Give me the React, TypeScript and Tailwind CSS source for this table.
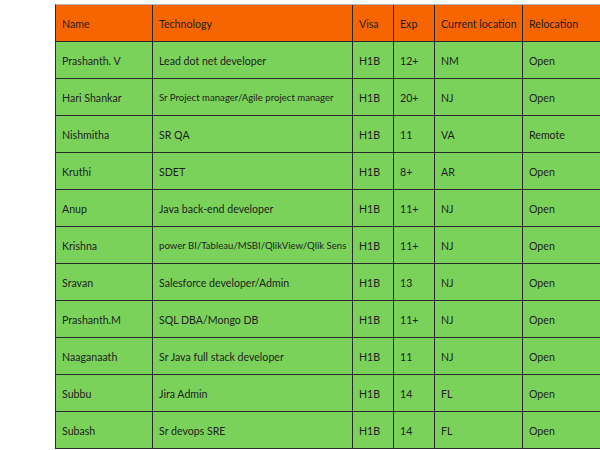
import React from "react";

interface Candidate {
  name: string;
  tech: string;
  visa: string;
  exp: string;
  location: string;
  relocation: string;
  small?: boolean;
}

const rows: Candidate[] = [
  { name: "Prashanth. V", tech: "Lead dot net developer", visa: "H1B", exp: "12+", location: "NM", relocation: "Open" },
  { name: "Hari Shankar", tech: "Sr Project manager/Agile project manager", visa: "H1B", exp: "20+", location: "NJ", relocation: "Open", small: true },
  { name: "Nishmitha", tech: "SR QA", visa: "H1B", exp: "11", location: "VA", relocation: "Remote" },
  { name: "Kruthi", tech: "SDET", visa: "H1B", exp: "8+", location: "AR", relocation: "Open" },
  { name: "Anup", tech: "Java back-end developer", visa: "H1B", exp: "11+", location: "NJ", relocation: "Open" },
  // the sheet cuts this cell off at the column edge
  { name: "Krishna", tech: "power BI/Tableau/MSBI/QlikView/Qlik Sens", visa: "H1B", exp: "11+", location: "NJ", relocation: "Open", small: true },
  { name: "Sravan", tech: "Salesforce developer/Admin", visa: "H1B", exp: "13", location: "NJ", relocation: "Open" },
  { name: "Prashanth.M", tech: "SQL DBA/Mongo DB", visa: "H1B", exp: "11+", location: "NJ", relocation: "Open" },
  { name: "Naaganaath", tech: "Sr Java full stack developer", visa: "H1B", exp: "11", location: "NJ", relocation: "Open" },
  { name: "Subbu", tech: "Jira Admin", visa: "H1B", exp: "14", location: "FL", relocation: "Open" },
  { name: "Subash", tech: "Sr devops SRE", visa: "H1B", exp: "14", location: "FL", relocation: "Open" },
];

// column widths measured off the grid lines
const cols = ["w-[97px]", "w-[200px]", "w-[41px]", "w-[41px]", "w-[88px]", "w-[150px]"];

function Row({ cells, header, small }: { cells: string[]; header?: boolean; small?: boolean }) {
  return (
    <div
      className={`flex h-[37px] border-b border-[#2a2a2a] ${header ? "bg-[#f76500]" : "bg-[#7bd25a]"}`}
    >
      {cells.map((c, i) => (
        <div
          key={i}
          className={`${cols[i]} shrink-0 flex items-center whitespace-nowrap pl-[6px] pt-[2px] border-r border-[#2a2a2a] ${
            i === 1 && small ? "text-[9.6px]" : "text-[10.6px]"
          }`}
        >
          {c}
        </div>
      ))}
    </div>
  );
}

export default function App() {
  return (
    <div className="w-[600px] h-[450px] overflow-hidden bg-white pt-[4px]">
      <div
        className="ml-[55px] w-[620px] border-t border-l border-t-[#b5b5b5] border-l-[#2a2a2a] text-[#1e1e1e] leading-none"
        style={{ fontFamily: "Lato, 'Open Sans', sans-serif" }}
      >
        <Row header cells={["Name", "Technology", "Visa", "Exp", "Current location", "Relocation"]} />
        {rows.map((r) => (
          <Row
            key={r.name}
            small={r.small}
            cells={[r.name, r.tech, r.visa, r.exp, r.location, r.relocation]}
          />
        ))}
      </div>
    </div>
  );
}
